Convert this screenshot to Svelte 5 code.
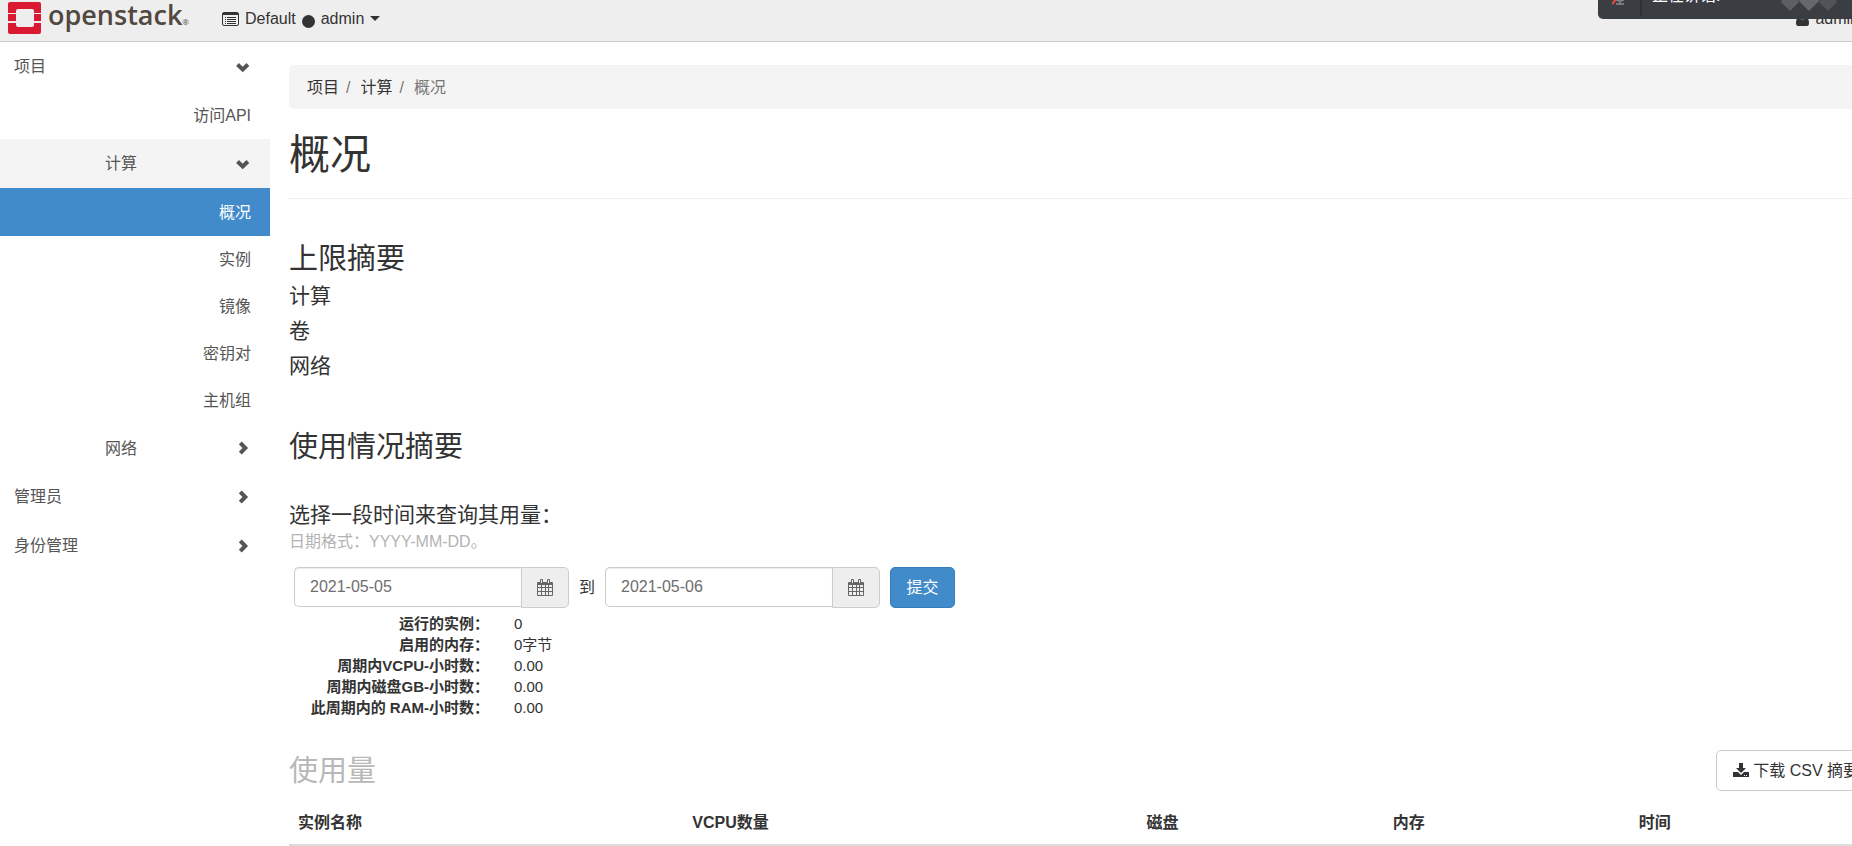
<script lang="ts">
  type NavItem = {
    label: string;
    level: "panel" | "group" | "item";
    open?: boolean;
    active?: boolean;
  };

  const nav: NavItem[] = [
    { label: "项目", level: "panel", open: true },
    { label: "访问API", level: "item" },
    { label: "计算", level: "group", open: true },
    { label: "概况", level: "item", active: true },
    { label: "实例", level: "item" },
    { label: "镜像", level: "item" },
    { label: "密钥对", level: "item" },
    { label: "主机组", level: "item" },
    { label: "网络", level: "group" },
    { label: "管理员", level: "panel" },
    { label: "身份管理", level: "panel" },
  ];

  const limits = ["计算", "卷", "网络"];

  const usage = [
    { label: "运行的实例：", value: "0" },
    { label: "启用的内存：", value: "0字节" },
    { label: "周期内VCPU-小时数：", value: "0.00" },
    { label: "周期内磁盘GB-小时数：", value: "0.00" },
    { label: "此周期内的 RAM-小时数：", value: "0.00" },
  ];

  // relative widths, the fixed table layout scales them to the row
  const columns = [
    { label: "实例名称", width: 394 },
    { label: "VCPU数量", width: 454 },
    { label: "磁盘", width: 246 },
    { label: "内存", width: 246 },
    { label: "时间", width: 246 },
  ];

  let start = $state("2021-05-05");
  let end = $state("2021-05-06");
</script>

{#snippet calendar()}
  <svg width="16" height="17" viewBox="0 0 16 17" aria-hidden="true">
    <path fill="#666" fill-rule="evenodd" d="M1 3h14q1 0 1 1v12q0 1-1 1H1q-1 0-1-1V4q0-1 1-1zM1 6v2h3V6zm4 0v2h3V6zm4 0v2h2V6zm3 0v2h3V6zM1 9v3h3V9zm4 0v3h3V9zm4 0v3h2V9zm3 0v3h3V9zM1 13v3h3v-3zm4 0v3h3v-3zm4 0v3h2v-3zm3 0v3h3v-3z" />
    <rect x="3" y="0" width="3" height="5" rx="1" fill="#666" />
    <rect x="10" y="0" width="3" height="5" rx="1" fill="#666" />
    <path stroke="#eee" d="M4.5 1v3M11.5 1v3" />
  </svg>
{/snippet}

<div class="page">
  <header class="topbar">
    <a class="brand" href="#home">
      <svg width="33" height="32" viewBox="0 0 33 32" aria-hidden="true">
        <path fill="#da1a32" d="M2 0h29q2 0 2 2v9h-7V9q0-2-2-2H10Q8 7 8 9v2H0V2q0-2 2-2zM0 12h8v7H0zM26 12h7v7h-7zM0 21h8v2q0 2 2 2h14q2 0 2-2v-2h7v9q0 2-2 2H2q-2 0-2-2z" />
      </svg>
      <span class="wordmark">openstack<small>®</small></span>
    </a>

    <button class="context" type="button">
      <svg width="17" height="14" viewBox="0 0 17 14" aria-hidden="true">
        <rect x=".5" y=".5" width="16" height="13" rx="1.5" fill="none" stroke="#333" />
        <path fill="#333" d="M1 1h15v2H1z" />
        <path stroke="#333" d="M3 5.5h1M5 5.5h9M3 7.5h1M5 7.5h9M3 9.5h1M5 9.5h9M3 11.5h1M5 11.5h9" />
      </svg>
      <span>Default</span>
      <i class="dot"></i>
      <span>admin</span>
      <i class="caret"></i>
    </button>

    <button class="user" type="button">
      <svg width="13" height="14" viewBox="0 0 13 14" aria-hidden="true">
        <circle cx="6.5" cy="4" r="3.5" fill="#333" />
        <path fill="#333" d="M3 6q3.500 3 7 0 3 0 3 5 0 3-2 3H2q-2 0-2-3 0-5 3-5z" />
      </svg>
      <span>admin</span>
    </button>

    <div class="speaking">
      <svg class="mic" width="14" height="20" viewBox="0 0 14 20" aria-hidden="true">
        <path fill="none" stroke="#8b8f94" stroke-width="1.500" d="M2 8q0 8 6 8t5-7M8 16v3M4 19h8" />
        <rect x="5" y="2" width="5" height="11" rx="2.500" fill="#8b8f94" />
        <path stroke="#f04a3e" stroke-width="2" d="M0 19L13 4" />
      </svg>
      <span class="speaker">正在讲话:</span>
      <svg class="gems" width="56" height="32" viewBox="0 0 56 32" aria-hidden="true">
        <path fill="#5d6063" d="M0 23L4 14h10l4 9-9 9z" />
        <path fill="#66686b" d="M18 22l5-9h10l5 9-10 10z" />
        <path fill="#515457" d="M38 23l4-9h10l4 9-9 9z" />
      </svg>
    </div>
  </header>

  <div class="columns">
    <nav class="sidebar">
      {#each nav as entry}
        <a class={entry.level} class:open={entry.open} class:active={entry.active} href="#{entry.label}">
          <span>{entry.label}</span>
          {#if entry.level !== "item"}
            <svg class="chevron" width="16" height="16" viewBox="0 0 16 16" aria-hidden="true">
              {#if entry.open}
                <path d="M2.500 5.500l5.200 5 5.200-5" />
              {:else}
                <path d="M5.300 2.800l5 5.200-5 5.200" />
              {/if}
            </svg>
          {/if}
        </a>
      {/each}
    </nav>

    <main>
      <ol class="breadcrumb">
        <li><a href="#project">项目</a></li>
        <li><a href="#compute">计算</a></li>
        <li class="current">概况</li>
      </ol>

      <h1>概况</h1>

      <section class="limits">
        <h2>上限摘要</h2>
        {#each limits as limit}
          <h3>{limit}</h3>
        {/each}
      </section>

      <section class="summary">
        <h2>使用情况摘要</h2>
        <form onsubmit={(e) => e.preventDefault()}>
          <h3>选择一段时间来查询其用量：</h3>
          <p>日期格式：YYYY-MM-DD。</p>
          <div class="range">
            <div class="date">
              <input type="text" aria-label="开始日期" bind:value={start} />
              <button type="button" aria-label="选择开始日期">{@render calendar()}</button>
            </div>
            <label for="end">到</label>
            <div class="date">
              <input id="end" type="text" bind:value={end} />
              <button type="button" aria-label="选择结束日期">{@render calendar()}</button>
            </div>
            <button class="submit" type="submit">提交</button>
          </div>
        </form>

        <dl>
          {#each usage as row}
            <dt>{row.label}</dt>
            <dd>{row.value}</dd>
          {/each}
        </dl>
      </section>

      <section>
        <div class="table-head">
          <h2>使用量</h2>
          <a class="download" href="#csv">
            <svg width="16" height="15" viewBox="0 0 16 15" aria-hidden="true">
              <path fill="#333" fill-rule="evenodd" d="M6 0h4v5h3L8 10 3 5h3zM0 9h5l3 3 3-3h5v5H0zm11 3v1h1v-1zm2 0v1h1v-1z" />
            </svg>
            下载 CSV 摘要
          </a>
        </div>
        <table>
          <thead>
            <tr>
              {#each columns as column}
                <th scope="col" style:width="{column.width}px">{column.label}</th>
              {/each}
            </tr>
          </thead>
        </table>
      </section>
    </main>
  </div>
</div>

<style>
  :global(body) {
    margin: 0;
    background: #fff;
  }

  .page {
    overflow: hidden;
    color: #333;
    font: 16px/23px "Liberation Sans", "Noto Sans CJK SC", sans-serif;
  }

  a {
    color: inherit;
    text-decoration: none;
  }

  button,
  input,
  th {
    box-sizing: border-box;
  }

  button,
  input {
    margin: 0;
    font: inherit;
    color: inherit;
  }

  h1,
  h2,
  h3,
  p,
  dl,
  dd,
  ol {
    margin: 0;
    padding: 0;
    font-weight: 400;
  }

  .topbar {
    position: relative;
    display: flex;
    align-items: center;
    height: 41px;
    border-bottom: 1px solid #ccc;
    background: #eee;
  }

  .brand {
    display: flex;
    gap: 7px;
    height: 37px;
    padding-left: 8px;
  }

  .wordmark {
    color: #51483f;
    font: 600 27px/26px "Open Sans", sans-serif;
  }

  .wordmark small {
    font-size: 8px;
    font-weight: 400;
  }

  .context,
  .user {
    display: flex;
    align-items: center;
    gap: 6px;
    margin-bottom: 4px;
    padding: 0;
    border: 0;
    background: none;
    line-height: 20px;
  }

  .context {
    margin-left: 33px;
  }

  .user {
    margin-left: auto;
    margin-right: -7px;
  }

  .dot {
    width: 13px;
    height: 13px;
    margin-top: 5px;
    border-radius: 50%;
    background: #333;
  }

  .caret {
    border: 5px solid transparent;
    border-top-color: #333;
    border-bottom: 0;
  }

  /* call widget docked over the top edge */
  .speaking {
    position: absolute;
    top: -29px;
    right: 0;
    display: flex;
    align-items: center;
    box-sizing: border-box;
    width: 254px;
    height: 48px;
    padding: 0 15px 0 14px;
    border-radius: 5px;
    border-bottom-right-radius: 0;
    background: #3a3d42;
    color: #fff;
  }

  .mic {
    align-self: end;
    margin-bottom: 14px;
  }

  .speaker {
    margin-left: 14px;
    padding-top: 2px;
    padding-left: 10px;
    border-left: 2px solid #2d3034;
    line-height: 40px;
  }

  .gems {
    align-self: end;
    margin: 0 0 8px auto;
  }

  .columns {
    display: flex;
    width: calc(100% + 40px);
  }

  .sidebar {
    flex: 0 0 270px;
    color: #555;
  }

  .sidebar a {
    display: flex;
    align-items: center;
    justify-content: space-between;
    height: 49px;
    padding: 0 19px 0 14px;
  }

  .sidebar .group {
    height: 48px;
    padding-left: 105px;
  }

  .sidebar .group.open {
    height: 49px;
    background: #f4f4f4;
  }

  .sidebar .item {
    justify-content: flex-end;
    height: 47px;
  }

  .sidebar .panel + .item {
    height: 48px;
  }

  .sidebar .item.active {
    height: 48px;
    background: #428bca;
    color: #fff;
  }

  .chevron {
    fill: none;
    stroke: #555;
    stroke-width: 4;
  }

  main {
    flex: 1;
    min-width: 0;
    padding: 23px 16px 0 19px;
  }

  .breadcrumb {
    display: flex;
    padding: 11px 18px 10px;
    border-radius: 5px;
    background: #f4f4f4;
    list-style: none;
  }

  .breadcrumb li + li::before {
    content: "/";
    padding: 0 10px 0 7px;
    color: #777;
  }

  .current {
    color: #777;
  }

  h1 {
    padding: 22px 0 19px;
    border-bottom: 1px solid #eee;
    font-size: 41px;
    line-height: 48px;
  }

  h2 {
    font-size: 29px;
    line-height: 32px;
  }

  h3 {
    font-size: 21px;
    line-height: 24px;
  }

  .limits {
    padding-top: 44px;
  }

  .limits h2 {
    padding-bottom: 9px;
  }

  .limits h3 {
    padding-bottom: 11px;
  }

  .summary {
    padding-top: 42px;
  }

  form {
    padding-top: 40px;
  }

  form p {
    padding: 2px 0 12px;
    color: #b3b3b3;
    line-height: 26px;
  }

  .range {
    display: flex;
    align-items: center;
    gap: 10px;
    padding-left: 5px;
  }

  .date {
    display: flex;
    width: 275px;
    height: 41px;
  }

  .date input {
    flex: 1;
    min-width: 0;
    height: 40px;
    padding: 0 15px;
    border: 1px solid #ccc;
    border-right: 0;
    border-radius: 5px 0 0 5px;
    background: #fff;
    box-shadow: inset 0 1px 1px rgb(0 0 0 / 8%);
    color: #6e6e6e;
  }

  .date button {
    width: 48px;
    padding: 0;
    border: 1px solid #ccc;
    border-radius: 0 5px 5px 0;
    background: #eee;
    line-height: 0;
  }

  .submit {
    width: 65px;
    height: 41px;
    padding: 0;
    border: 1px solid #357ebd;
    border-radius: 5px;
    background: #428bca;
    color: #fff;
  }

  dl {
    display: grid;
    grid-template-columns: 200px 1fr;
    column-gap: 25px;
    padding-top: 5px;
    font-size: 15px;
    line-height: 21px;
  }

  dt {
    font-weight: 700;
    text-align: right;
  }

  .table-head {
    display: flex;
    align-items: center;
    justify-content: space-between;
    padding: 32px 0 8px;
  }

  .table-head h2 {
    color: #b8b8b8;
  }

  .download {
    display: flex;
    align-items: center;
    gap: 4px;
    box-sizing: border-box;
    height: 41px;
    padding: 0 16px;
    border: 1px solid #ccc;
    border-radius: 5px;
  }

  table {
    width: 100%;
    border-collapse: collapse;
    table-layout: fixed;
  }

  th {
    padding: 12px 9px 10px;
    border-bottom: 2px solid #ddd;
    text-align: left;
  }
</style>
